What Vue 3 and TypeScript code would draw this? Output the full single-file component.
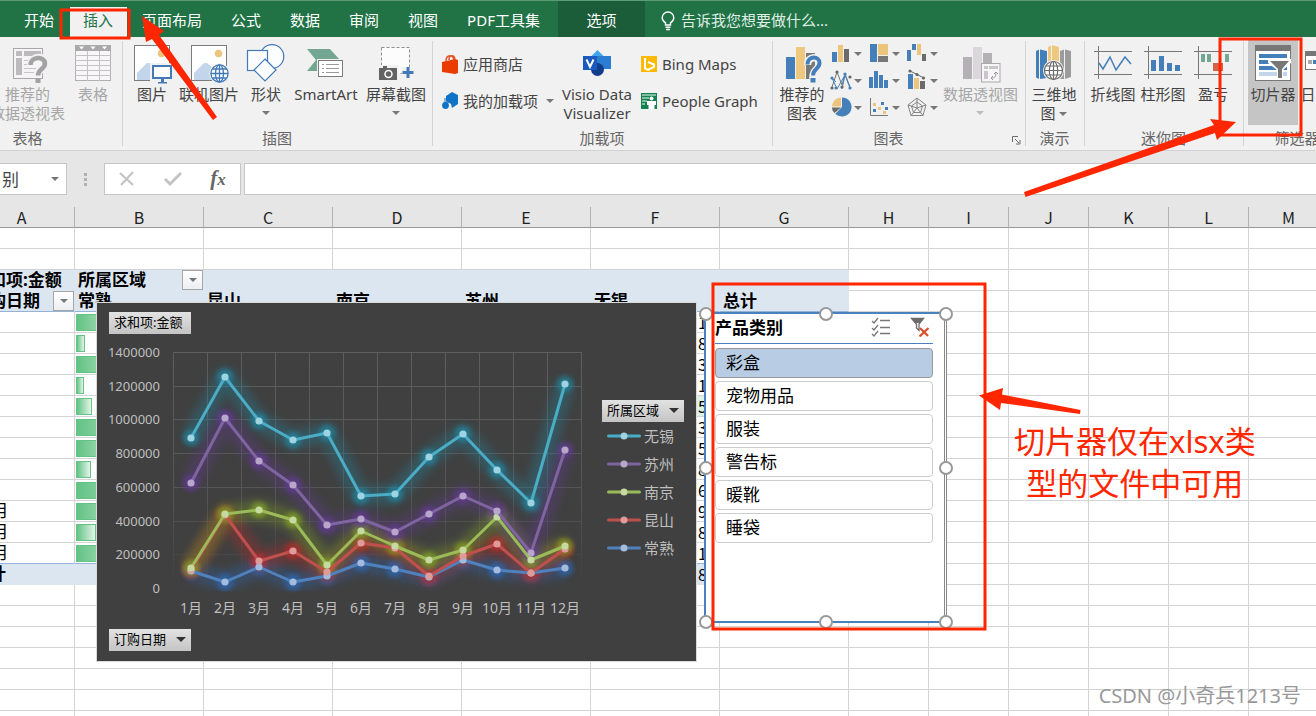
<script setup lang="ts">
interface Series {
  name: string
  color: string
  dot: string
  glow: string
  values: number[]
}

interface PivotRow {
  label: string
  bar: number
  last: string
  lastBar?: boolean
}

const tabs: string[] = ['开始', '插入', '页面布局', '公式', '数据', '审阅', '视图', 'PDF工具集']
const columns: string[] = ['A', 'B', 'C', 'D', 'E', 'F', 'G', 'H', 'I', 'J', 'K', 'L', 'M']
const regions: string[] = ['昆山', '南京', '苏州', '无锡', '总计']
const blankRows: number[] = [1, 2, 3, 4, 5, 6, 7]

const rows: PivotRow[] = [
  { label: '1月', bar: 60, last: '1' },
  { label: '2月', bar: 9, last: '8' },
  { label: '3月', bar: 64, last: '3' },
  { label: '4月', bar: 8, last: '1' },
  { label: '5月', bar: 16, last: '5', lastBar: true },
  { label: '6月', bar: 90, last: '3' },
  { label: '7月', bar: 60, last: '5' },
  { label: '8月', bar: 15, last: '8' },
  { label: '9月', bar: 104, last: '6' },
  { label: '10月', bar: 70, last: '9' },
  { label: '11月', bar: 20, last: '8' },
  { label: '12月', bar: 68, last: '1' },
]

const products: string[] = ['彩盒', '宠物用品', '服装', '警告标', '暖靴', '睡袋']

// Values in thousands, one per month
const series: Series[] = [
  { name: '常熟', color: '#4f81bd', dot: '#a3bbdd', glow: '#2e66b0', values: [101, 36, 125, 36, 71, 150, 115, 65, 166, 107, 89, 121] },
  { name: '昆山', color: '#c0504d', dot: '#df9b99', glow: '#b52a2a', values: [107, 433, 160, 219, 95, 267, 237, 73, 190, 261, 89, 231] },
  { name: '南京', color: '#9bbb59', dot: '#c6d9a0', glow: '#7f9f26', values: [119, 439, 463, 403, 136, 338, 249, 166, 225, 424, 168, 249] },
  { name: '苏州', color: '#8064a2', dot: '#b8a6cb', glow: '#623a92', values: [623, 1008, 753, 611, 374, 409, 332, 439, 546, 457, 208, 819] },
  { name: '无锡', color: '#4bacc6', dot: '#9ed4e2', glow: '#23839d', values: [890, 1252, 991, 878, 919, 546, 558, 777, 914, 700, 504, 1210] },
]
const legend: Series[] = [...series].reverse()

const ticks: number[] = [1400, 1200, 1000, 800, 600, 400, 200, 0]
const months: number[] = Array.from({ length: 12 }, (_, i) => i + 1)

const xOf = (i: number): number => 94 + i * 34
const yOf = (v: number): number => Math.round(285 - (v * 236) / 1400)
const pointsOf = (s: Series): string => s.values.map((v, i) => `${xOf(i)},${yOf(v)}`).join(' ')
</script>

<template>
  <div class="excel">
    <nav class="tabs">
      <button v-for="t in tabs" :key="t" class="tab" :class="{ active: t === '插入' }">{{ t }}</button>
      <button class="tab options">选项</button>
      <label class="tell">
        <svg width="14" height="20" viewBox="0 0 14 20" fill="none" stroke="#fff" stroke-width="1.4">
          <path d="M4.5 14v-2.2C2.5 10.500 1.200 9 1.200 6.700a5.800 5.700 0 0 1 11.600 0c0 2.300-1.300 3.800-3.300 5.100V14z" />
          <path d="M4.500 16.200h5M5 18.500h4" />
        </svg>
        <input type="text" placeholder="告诉我您想要做什么..." aria-label="告诉我您想要做什么" />
      </label>
    </nav>

    <div class="ribbon">
      <section class="group g-table">
        <div class="tools">
          <button class="big dim w75">
            <svg width="40" height="40" viewBox="8 44 40 40">
              <rect x="13.500" y="48.500" width="29" height="30" fill="#f6f4f6" stroke="#a8a8a8" />
              <path d="M16 51h6v5h-6zM24 51h17v5H24zM16 58h6v17h-6z" fill="#bcbabd" />
              <path d="M24 60.500h8M24 64.500h7M24 68.500h12M24 72.500h10" stroke="#c4c4c4" />
              <path d="M30.500 65c0-10 15.500-10 15.500-1.500 0 6-8 5-8 12" fill="none" stroke="#f1f1f1" stroke-width="7" />
              <path d="M30.500 65c0-9 14.500-9 14.500-1.500 0 6-7 5-7 12" fill="none" stroke="#a3a3a3" stroke-width="4.500" />
              <rect x="35.500" y="78" width="5" height="5" fill="#a3a3a3" />
            </svg>
            <span>推荐的<br />数据透视表</span>
          </button>
          <button class="big dim w42">
            <svg width="40" height="40" viewBox="73 44 40 40">
              <rect x="75.500" y="45.500" width="35" height="35" fill="#f8f6f8" stroke="#b0b0b0" />
              <path d="M75 45h36v6H75z" fill="#a9a9a9" />
              <path d="M79 46.500h5l-2.500 3zM90.500 46.500h5l-2.500 3zM102 46.500h5l-2.500 3z" fill="#fff" />
              <path d="M75 55.500h36M75 60.500h36M75 65.500h36M75 70.500h36M75 75.500h36M87.500 51v30M99.500 51v30" stroke="#c2c2c2" />
            </svg>
            <span>表格</span>
          </button>
        </div>
        <h2>表格</h2>
      </section>

      <section class="group g-illus">
        <div class="tools">
          <button class="big w42">
            <svg width="40" height="40" viewBox="132 44 40 40">
              <rect x="134.500" y="45.500" width="35" height="35" fill="#fff" stroke="#7c7c7c" />
              <circle cx="161.500" cy="53.500" r="3.700" fill="#edc47c" />
              <path d="M137 80v-7l10-10h3l5 5v12z" fill="#c3d5ea" />
              <path d="M150 63h22v21h-22z" fill="#f1f1f1" />
              <rect x="153" y="66" width="18" height="12" fill="#fff" stroke="#4379b6" stroke-width="2" />
              <path d="M161 79h3v3h-3zM158 82h9v1.500h-9z" fill="#4379b6" />
            </svg>
            <span>图片</span>
          </button>
          <button class="big w66">
            <svg width="40" height="40" viewBox="189 44 40 40">
              <rect x="191.500" y="45.500" width="35" height="35" fill="#fff" stroke="#7c7c7c" />
              <circle cx="218.500" cy="53.500" r="3.700" fill="#edc47c" />
              <path d="M194 80v-7l10-10h3l6 5v12z" fill="#c3d5ea" />
              <circle cx="219.500" cy="73.500" r="10.300" fill="#f1f1f1" />
              <g fill="#fff" stroke="#4379b6" stroke-width="1.300">
                <circle cx="219.500" cy="73.500" r="8.600" />
                <ellipse cx="219.500" cy="73.500" rx="4" ry="8.600" />
                <path d="M219.500 65v17M211 73.500h17M212.500 69h14M212.500 78h14" />
              </g>
            </svg>
            <span>联机图片</span>
          </button>
          <button class="big w42">
            <svg width="40" height="40" viewBox="247 44 40 40" fill="#fcfdff" stroke="#4379b6" stroke-width="1.200">
              <circle cx="273" cy="56.500" r="11.800" />
              <rect x="248.500" y="50.500" width="20" height="20" />
              <path d="M266 59l11 11-11 11-11-11z" />
            </svg>
            <span>形状<i class="caret"></i></span>
          </button>
          <button class="big w70">
            <svg width="40" height="40" viewBox="308 44 40 40">
              <path d="M309 49h23l10 11-9 11h-24l9-11z" fill="#73a792" />
              <rect x="319" y="59" width="27" height="19" fill="#f1f1f1" />
              <rect x="320.500" y="60.500" width="24" height="16" fill="#fff" stroke="#7c7c7c" />
              <path d="M324 64.500h2M328 64.500h13M324 68.500h2M328 68.500h13M324 72.500h2M328 72.500h13" stroke="#9a9a9a" />
            </svg>
            <span>SmartArt</span>
          </button>
          <button class="big w66">
            <svg width="40" height="40" viewBox="375 44 40 40">
              <rect x="380.500" y="47.500" width="28" height="26" fill="#fcfcfc" stroke="#8f8f8f" stroke-dasharray="3 2" />
              <path d="M377 65h21v16h-21zM401 67h12v12h-12z" fill="#f1f1f1" />
              <path d="M378 68h4v-2h4v2h10v12h-18z" fill="#636363" />
              <circle cx="387.500" cy="74" r="3.500" fill="none" stroke="#fff" stroke-width="1.500" />
              <path d="M407 67v11M401.500 72.500h11" stroke="#4379b6" stroke-width="3" />
            </svg>
            <span>屏幕截图<i class="caret"></i></span>
          </button>
        </div>
        <h2>插图</h2>
      </section>

      <section class="group g-addin">
        <div class="tools">
          <div class="stack">
            <button class="small">
              <svg width="18" height="20" viewBox="441 53 18 20">
                <path d="M446 60c0-7 8-7 8 0M449 59c0-5 5-6 6-1" fill="none" stroke="#e8502a" stroke-width="1.500" />
                <path d="M442 61l13-3 3 1v13l-3 1-13-2z" fill="#eb3c00" />
              </svg>应用商店
            </button>
            <button class="small">
              <svg width="18" height="18" viewBox="441 92 18 18" fill="#0f73c6">
                <path d="M446 96l6-4 6 3v9l-6 4-1-4-5-3z" />
                <circle cx="445.500" cy="105.500" r="3.400" />
                <path d="M444 98h5v5h-5z" opacity=".5" />
              </svg>我的加载项<i class="caret far"></i>
            </button>
          </div>
          <button class="big w74">
            <svg width="40" height="40" viewBox="577 44 40 40">
              <path d="M597.500 50l9 9-9 9-9-9z" fill="#41a5ee" />
              <rect x="597" y="56" width="14" height="13" fill="#2b7cd3" />
              <circle cx="597.500" cy="69.500" r="6.500" fill="#123c8c" />
              <rect x="583" y="56" width="14" height="14" fill="#185abd" />
              <path d="M586.500 59.500l3.500 7.500 3.500-7.500" fill="none" stroke="#fff" stroke-width="2" />
            </svg>
            <span>Visio Data<br />Visualizer</span>
          </button>
          <div class="stack">
            <button class="small">
              <svg width="18" height="18" viewBox="640 55 18 18">
                <rect x="641" y="56" width="16" height="16" fill="#ffb900" />
                <path d="M645 58v10.500l3 1.500 6-3v-2.500l-6-2.500" fill="none" stroke="#fff" stroke-width="2" />
              </svg>Bing Maps
            </button>
            <button class="small">
              <svg width="18" height="18" viewBox="640 92 18 18">
                <rect x="641" y="93" width="16" height="16" fill="#12804f" />
                <path d="M642 95h14M642 98h7M642 101h5M642 104h3" stroke="#a8d4be" stroke-width="1.300" />
                <circle cx="651.500" cy="98.500" r="2" fill="#fff" />
                <path d="M647 101h9v4h-1.500v4h-6v-4H647z" fill="#fff" />
              </svg>People Graph
            </button>
          </div>
        </div>
        <h2>加载项</h2>
      </section>

      <section class="group g-charts">
        <div class="tools">
          <button class="big w50">
            <svg width="40" height="40" viewBox="783 44 40 40">
              <path d="M787 57h9v22h-9z" fill="#447fb9" />
              <path d="M797 47h9v32h-9z" fill="#edc87e" />
              <path d="M807 53h9v26h-9z" fill="#777" />
              <path d="M808.500 65c0-9.500 12-9.500 12-1.500 0 6-6.500 6-6.500 13v5" fill="none" stroke="#f1f1f1" stroke-width="7.500" />
              <path d="M808.500 64.500c0-9 12-9 12-1.500 0 6-6.500 5.500-6.500 12.500" fill="none" stroke="#447fb9" stroke-width="4" />
              <rect x="811.500" y="78" width="5" height="4.500" fill="#447fb9" />
            </svg>
            <span>推荐的<br />图表</span>
          </button>
          <div class="mini">
            <button aria-label="柱形图">
              <svg width="23" height="23" viewBox="829 42 23 23"><path d="M831 52h5v10h-5z" fill="#447fb9" /><path d="M837 45h5v17h-5z" fill="#edc47c" /><path d="M843 49h5v13h-5z" fill="#6b6b6b" /></svg><i class="caret"></i>
            </button>
            <button aria-label="层次结构图">
              <svg width="23" height="23" viewBox="867 42 23 23"><path d="M869 44h7v18h-7z" fill="#447fb9" /><path d="M877 44h10v11h-10z" fill="#edc47c" /><path d="M877 56h10v6h-10z" fill="#777" /></svg><i class="caret"></i>
            </button>
            <button aria-label="瀑布图">
              <svg width="23" height="23" viewBox="905 42 23 23"><path d="M906 50h4v11h-4zM911 44h4v6h-4z" fill="#447fb9" /><path d="M916 44h4v11h-4z" fill="#edc47c" /><path d="M921 54h4v7h-4z" fill="#6b6b6b" /></svg><i class="caret"></i>
            </button>
            <button aria-label="折线图">
              <svg width="23" height="23" viewBox="829 69 23 23"><g fill="none"><path d="M831 87l5-15 5 13 3-11 5 13" stroke="#777" /><path d="M831 78l5 11 8-14-3 14M844 75l5 13M831 78l4 4" stroke="#447fb9" /></g><g fill="#447fb9"><circle cx="831" cy="78" r="1.600" /><circle cx="835" cy="88" r="1.600" /><circle cx="844" cy="74" r="1.600" /><circle cx="849" cy="88" r="1.600" /></g><g fill="#666"><circle cx="831" cy="88" r="1.600" /><circle cx="836" cy="72" r="1.600" /><circle cx="841" cy="87" r="1.600" /><circle cx="849" cy="77" r="1.600" /></g></svg><i class="caret"></i>
            </button>
            <button aria-label="直方图">
              <svg width="23" height="23" viewBox="867 69 23 23"><path d="M868 77h4v11h-4zM873 71h4v17h-4zM878 75h4v13h-4zM883 80h4v8h-4z" fill="#447fb9" /></svg><i class="caret"></i>
            </button>
            <button aria-label="组合图">
              <svg width="23" height="23" viewBox="905 69 23 23"><path d="M907 74h5v15h-5z" fill="#447fb9" /><path d="M913 78h5v11h-5z" fill="#edc47c" /><path d="M919 81h5v8h-5z" fill="#6b6b6b" /><path d="M909 71l6 3 8 4" stroke="#666" fill="none" /><g fill="#666"><circle cx="909" cy="71" r="1.600" /><circle cx="916" cy="74.500" r="1.600" /><circle cx="922.500" cy="78" r="1.600" /></g></svg><i class="caret"></i>
            </button>
            <button aria-label="饼图">
              <svg width="23" height="23" viewBox="829 96 23 23"><path d="M841 107V97.500a9.500 9.500 0 1 1-6.700 16.200z" fill="#447fb9" /><path d="M840 106.500h-9a9 9 0 0 1 9-9z" fill="#edc47c" /><path d="M840 107.500h-9c0 2.500 1 4 2.600 5.600z" fill="#6b6b6b" /></svg><i class="caret"></i>
            </button>
            <button aria-label="散点图">
              <svg width="23" height="23" viewBox="867 96 23 23"><path d="M869.500 98v17.500H887" stroke="#777" fill="none" /><path d="M872 103h3v3h-3zM882 111h3v3h-3zM877 107h3v3h-3z" fill="#edc47c" /><path d="M880 102h3v3h-3zM872 109h3v3h-3zM884 107h3v3h-3z" fill="#447fb9" /></svg><i class="caret"></i>
            </button>
            <button aria-label="雷达图">
              <svg width="23" height="23" viewBox="905 96 23 23" fill="none" stroke="#858585"><path d="M916 98l9 7-3 10.500h-12L907 105z" /><path d="M916 102l5.500 4-2 6.500h-7l-2-6.500z" /><path d="M916 98v10l9-3M916 108l6 7.500M916 108l-6 7.500M916 108l-9-3" /></svg><i class="caret"></i>
            </button>
          </div>
          <button class="big dim w77">
            <svg width="40" height="40" viewBox="961 44 40 40">
              <path d="M963 57h9v22h-9zM983 53h9v26h-9z" fill="#b3b1b4" />
              <path d="M973 47h9v32h-9z" fill="#dad6db" />
              <rect x="981.500" y="63.500" width="18.500" height="18.500" fill="#f7f5f7" stroke="#a9a9a9" />
              <path d="M984 66h4v3h-4zM989 66h9v3h-9zM984 71h4v8h-4z" fill="#c9c6ca" />
              <path d="M991 78c4 0 5-1 5-6m-2 2l2-2 2 2m-5 2l-2 2 2 2" fill="none" stroke="#999" />
            </svg>
            <span>数据透视图<i class="caret"></i></span>
          </button>
          <svg class="launcher" width="9" height="9" viewBox="0 0 9 9" fill="none" stroke="#6d6d6d"><path d="M.5 6V.5H6M3 3l4 4M8 4v4H4" /></svg>
        </div>
        <h2>图表</h2>
      </section>

      <section class="group g-tour">
        <div class="tools">
          <button class="big w50">
            <svg width="40" height="40" viewBox="1035 44 40 40">
              <path d="M1037 51l3-1.500V79l-3-1.500zM1041 49.500l7 1.500v27l-7 1z" fill="#447fb9" />
              <path d="M1049 47l3-1.500V79h-3zM1053 45l7 2v32h-7z" fill="#edc87e" />
              <path d="M1061 51l4-1.500V79h-4zM1066 49.500l6 1.500v26l-6 2z" fill="#9b9b9b" />
              <circle cx="1054.500" cy="70.500" r="10.500" fill="#f1f1f1" />
              <g fill="#fff" stroke="#6b6b6b" stroke-width="1.200">
                <circle cx="1054.500" cy="70.500" r="9" />
                <ellipse cx="1054.500" cy="70.500" rx="4.200" ry="9" />
                <path d="M1054.500 61.500v18M1045.500 70.500h18M1047 66h15M1047 75h15" />
              </g>
            </svg>
            <span>三维地<br />图 <i class="caret inline"></i></span>
          </button>
        </div>
        <h2>演示</h2>
      </section>

      <section class="group g-spark">
        <div class="tools">
          <button class="big w50">
            <svg width="40" height="40" viewBox="1094 44 40 40" fill="none" stroke="#777">
              <path d="M1099.500 46v33M1095 51.500h38M1095 74.500h38" />
              <path d="M1100 63l4 6 7-12 6 13 9-13 6 7" stroke="#447fb9" stroke-width="1.500" />
            </svg>
            <span>折线图</span>
          </button>
          <button class="big w50">
            <svg width="40" height="40" viewBox="1144 44 40 40" fill="none" stroke="#777">
              <path d="M1149.500 46v33M1145 51.500h38M1145 74.500h38" />
              <path d="M1152 60h5v11h-5zM1160 56h5v15h-5zM1168 63h5v8h-5zM1176 65h5v6h-5z" fill="#447fb9" stroke="none" />
            </svg>
            <span>柱形图</span>
          </button>
          <button class="big w50">
            <svg width="40" height="40" viewBox="1194 44 40 40" fill="none" stroke="#777">
              <path d="M1199.500 46v33M1195 51.500h38M1195 74.500h38" />
              <path d="M1202 54h4v8h-4zM1208 54h4v8h-4zM1226 54h4v8h-4z" fill="#73a792" stroke="none" />
              <path d="M1214 63h10v8h-10z" fill="#d86344" stroke="none" />
            </svg>
            <span>盈亏</span>
          </button>
        </div>
        <h2>迷你图</h2>
      </section>

      <section class="group g-filter">
        <div class="tools">
          <button class="big pressed w50">
            <svg width="40" height="40" viewBox="1253 44 40 40">
              <rect x="1255.500" y="45.500" width="35" height="35" fill="#fff" stroke="#777" />
              <path d="M1255 45h36v6h-36z" fill="#777" />
              <path d="M1259 54h28v4h-28zM1259 60h28v4h-28zM1259 66h28v4h-28z" fill="#447fb9" />
              <path d="M1259 72h28v4h-28z" fill="#c3d5ea" />
              <path d="M1268 59h23v4l-8 7v9h-6v-9l-9-7z" fill="#fff" />
              <path d="M1270 61h19l-7 8v9h-4v-9z" fill="#777" />
            </svg>
            <span>切片器</span>
          </button>
          <button class="big w50">
            <svg width="40" height="40" viewBox="1303 44 40 40">
              <rect x="1305.500" y="51.500" width="34" height="18" fill="#fff" stroke="#777" />
              <path d="M1305 51h35v5h-35z" fill="#777" />
              <path d="M1308 60h4v4h-4z" fill="#aaa" /><path d="M1313 60h8v4h-8z" fill="#447fb9" />
            </svg>
            <span>日程表</span>
          </button>
        </div>
        <h2>筛选器</h2>
      </section>
    </div>

    <div class="formula">
      <label class="namebox">
        <input type="text" value="别" aria-label="名称框" />
        <i class="caret"></i>
      </label>
      <span class="grip"><b></b><b></b><b></b></span>
      <div class="fx">
        <button aria-label="取消"><svg width="16" height="16" viewBox="0 0 16 16"><path d="M1 2l13 12M14 1L2 14" stroke="#c4c4c4" stroke-width="2.200" /></svg></button>
        <button aria-label="输入"><svg width="18" height="16" viewBox="0 0 18 16"><path d="M1 8l5 5L17 2" fill="none" stroke="#c4c4c4" stroke-width="3" /></svg></button>
        <button class="fn" aria-label="插入函数"><em>f</em><em class="sub">x</em></button>
      </div>
      <input class="bar" type="text" aria-label="编辑栏" />
    </div>

    <div class="sheet">
      <table>
        <colgroup>
          <col class="ca" />
          <col v-for="n in 6" :key="n" class="cb" />
          <col v-for="n in 6" :key="n" class="cc" />
        </colgroup>
        <thead>
          <tr><th v-for="c in columns" :key="c">{{ c }}</th></tr>
        </thead>
        <tbody>
          <tr v-for="n in 2" :key="n"><td v-for="c in columns" :key="c"></td></tr>
          <tr class="head">
            <td>求和项:金额</td>
            <td>所属区域<button class="filter" aria-label="筛选所属区域"><i class="caret"></i></button></td>
            <td v-for="n in 5" :key="n"></td>
            <td v-for="n in 6" :key="n" class="plain"></td>
          </tr>
          <tr class="head under">
            <td>订购日期<button class="filter" aria-label="筛选订购日期"><i class="caret"></i></button></td>
            <td>常熟</td>
            <td v-for="r in regions" :key="r">{{ r }}</td>
            <td v-for="n in 6" :key="n" class="plain"></td>
          </tr>
          <tr v-for="(r, i) in rows" :key="r.label" :class="{ under: i === rows.length - 1 }">
            <td>{{ r.label }}</td>
            <td class="data"><div class="databar" :style="{ width: r.bar + 'px' }"></div></td>
            <td v-for="n in 3" :key="n"></td>
            <td class="num" :class="{ tint: r.lastBar }">{{ r.last }}</td>
            <td></td>
            <td v-for="n in 6" :key="n" class="plain"></td>
          </tr>
          <tr class="head total">
            <td>总计</td>
            <td v-for="n in 4" :key="n"></td>
            <td class="num">8</td>
            <td></td>
            <td v-for="n in 6" :key="n" class="plain"></td>
          </tr>
          <tr v-for="n in blankRows" :key="n"><td v-for="c in columns" :key="c"></td></tr>
        </tbody>
      </table>
    </div>

    <div class="chart">
      <svg width="598" height="356" viewBox="0 0 598 356" role="img" aria-label="各区域金额折线图">
        <defs>
          <filter id="soft" x="-20%" y="-40%" width="140%" height="180%"><feGaussianBlur stdDeviation="5" /></filter>
          <filter id="halo" x="-20%" y="-40%" width="140%" height="180%"><feGaussianBlur stdDeviation="2.500" /></filter>
          <linearGradient id="fade" gradientUnits="userSpaceOnUse" x1="0" y1="49" x2="0" y2="285">
            <stop offset="0" stop-color="#5e5e5e" />
            <stop offset=".6" stop-color="#555" />
            <stop offset="1" stop-color="#404040" />
          </linearGradient>
        </defs>
        <g fill="url(#fade)">
          <rect v-for="n in 13" :key="'v' + n" :x="42 + n * 34" y="49" width="1" height="236" />
          <rect v-for="t in ticks.slice(0, 7)" :key="'h' + t" x="76" :y="yOf(t)" width="409" height="1" />
        </g>
        <g v-for="s in series" :key="'g' + s.name">
          <polyline :points="pointsOf(s)" fill="none" :stroke="s.glow" stroke-width="19" stroke-linejoin="round" opacity=".36" filter="url(#soft)" />
          <g filter="url(#halo)" opacity=".8">
            <circle v-for="(v, i) in s.values" :key="i" :cx="xOf(i)" :cy="yOf(v)" r="8" :fill="s.glow" />
          </g>
        </g>
        <g v-for="s in series" :key="s.name">
          <polyline :points="pointsOf(s)" fill="none" :stroke="s.color" stroke-width="3" stroke-linejoin="round" />
          <circle v-for="(v, i) in s.values" :key="i" :cx="xOf(i)" :cy="yOf(v)" r="3.600" :fill="s.dot" />
        </g>
        <g class="axis">
          <text v-for="t in ticks" :key="t" x="63" :y="yOf(t) + 5" text-anchor="end">{{ t * 1000 }}</text>
          <text v-for="m in months" :key="m" class="month" :x="xOf(m - 1)" y="310" text-anchor="middle">{{ m }}月</text>
        </g>
      </svg>
      <button class="field value">求和项:金额</button>
      <button class="field date">订购日期<i class="tri"></i></button>
      <div class="legend">
        <button class="field">所属区域<i class="tri"></i></button>
        <ul>
          <li v-for="s in legend" :key="s.name">
            <svg width="34" height="8" viewBox="0 0 34 8">
              <path d="M1.500 4h31" :stroke="s.color" stroke-width="3" stroke-linecap="round" />
              <circle cx="17" cy="4" r="3.500" :fill="s.dot" />
            </svg>{{ s.name }}
          </li>
        </ul>
      </div>
    </div>

    <div class="slicer">
      <header>
        <h3>产品类别</h3>
        <button aria-label="多选">
          <svg width="20" height="20" viewBox="0 0 20 20" fill="none" stroke="#777" stroke-width="1.300"><path d="M1 4l2 2 4-5M1 11l2 2 4-5M1 17l2 2 4-5M9 3.500h10M9 10.500h10M9 16.500h10" /></svg>
        </button>
        <button aria-label="清除筛选器">
          <svg width="20" height="20" viewBox="0 0 20 20"><path d="M1.500 1.500h12L9 7v6.500L6.500 11V7z" fill="#fff" stroke="#6b6b6b" stroke-width="1.300" /><path d="M1 1h13l-4 5H5z" fill="#6b6b6b" /><path d="M10 11l8 8M18.500 11L9.500 19.500" stroke="#d9532c" stroke-width="2.300" /></svg>
        </button>
      </header>
      <button v-for="(p, i) in products" :key="p" class="item" :class="{ on: i === 0 }">{{ p }}</button>
      <i v-for="h in ['nw', 'n', 'ne', 'w', 'e', 'sw', 's', 'se']" :key="h" class="handle" :class="h"></i>
    </div>

    <svg class="marks" width="1316" height="716" viewBox="0 0 1316 716">
      <g fill="none" stroke="#ff2600" stroke-width="3">
        <rect x="61" y="10" width="68" height="28" />
        <rect x="1220" y="39" width="81" height="96" />
        <rect x="713" y="284" width="272" height="345" />
      </g>
      <g fill="#ff2600">
        <path d="M142 16l22 15-5 4 58 82-4 3-61-81-6 3z" />
        <path d="M1236 122l-19 18-2-7-189.500 64-1.500-5 190-67-4-6z" />
        <path d="M979 395.500l24-7.500-1 6.500 78.500 15.500-.5 4-79-11-1 7z" />
      </g>
    </svg>
    <p class="note">切片器仅在xlsx类<br />型的文件中可用</p>
    <p class="watermark">CSDN @小奇兵1213号</p>
  </div>
</template>

<style>
body {
  margin: 0;
}
</style>

<style scoped>
* {
  box-sizing: border-box;
}
.excel {
  position: relative;
  height: 100vh;
  overflow: hidden;
  background: #fff;
  color: #444;
  font: 15px/19px 'Noto Sans', 'Noto Sans CJK SC', sans-serif;
}
button,
input {
  margin: 0;
  padding: 0;
  border: 0;
  background: none;
  color: inherit;
  font: inherit;
}
i.caret {
  display: block;
  width: 0;
  border: 4px solid transparent;
  border-top-color: #777;
  border-bottom: 0;
}
.tabs {
  display: flex;
  gap: 1px;
  height: 37px;
  padding: 3px 0 0 10px;
  border-top: 1px solid #5d9a78;
  background: #217346;
  color: #fff;
}
.tab {
  padding: 0 14px;
  white-space: nowrap;
}
.tab.active {
  margin: 3px 0 0 1px;
  padding: 0 14px 3px 13px;
  background: #f1f1f1;
  color: #217346;
}
.tab.options {
  width: 87px;
  margin: -3px 0 0 3px;
  padding-top: 3px;
  background: #1b5c39;
}
.tell {
  display: flex;
  align-items: center;
  gap: 6px;
  margin-left: 15px;
}
.tell input {
  width: 200px;
}
.tell input::placeholder {
  color: #dfeee5;
  opacity: 1;
}
.ribbon {
  display: flex;
  height: 114px;
  padding-top: 3px;
  border-bottom: 1px solid #d2d2d2;
  background: #f1f1f1;
  overflow: hidden;
}
.group {
  display: flex;
  flex: none;
  flex-direction: column;
  position: relative;
}
.group::after {
  content: '';
  position: absolute;
  top: 1px;
  right: 0;
  width: 1px;
  height: 105px;
  background: #d4d4d4;
}
.group h2 {
  margin: 0;
  padding-right: 2px;
  color: #666;
  font-size: 15px;
  font-weight: 400;
  line-height: 19px;
  text-align: center;
}
.tools {
  display: flex;
  height: 89px;
}
.g-table {
  width: 189px;
  margin-left: -66px;
}
.g-table .tools {
  justify-content: flex-end;
  gap: 7px;
  padding-right: 9px;
}
.g-illus {
  width: 310px;
}
.g-illus .tools {
  padding-left: 7px;
  gap: 3px;
}
.g-illus .w42 {
  width: 44px;
}
.g-addin {
  width: 340px;
}
.g-addin .tools {
  padding-left: 8px;
}
.g-charts {
  width: 253px;
  padding-right: 20px;
}
.g-charts .tools {
  padding-left: 4px;
}
.g-tour {
  width: 59px;
}
.g-tour .tools {
  padding-left: 3px;
}
.g-spark {
  width: 159px;
}
.g-spark .tools {
  padding-left: 3px;
}
.g-filter {
  width: 108px;
}
.g-filter .tools {
  padding-left: 4px;
}
.big {
  display: flex;
  flex: none;
  flex-direction: column;
  align-items: center;
  height: 85px;
  padding-top: 4px;
  white-space: nowrap;
}
.big span {
  display: block;
  margin-top: 1px;
}
.big .caret {
  margin: 7px auto 0;
}
.big .caret.inline {
  display: inline-block;
  margin: 0 0 3px;
}
.big.dim {
  color: #a6a6a6;
}
.dim .caret {
  border-top-color: #bdbdbd;
}
.big.pressed {
  background: #c5c5c5;
}
.w42 {
  width: 42px;
}
.w50 {
  width: 50px;
}
.w66 {
  width: 64px;
}
.w70 {
  width: 70px;
}
.w74 {
  width: 76px;
}
.w75 {
  width: 75px;
}
.w77 {
  width: 77px;
}
.stack {
  display: flex;
  flex: none;
  flex-direction: column;
  gap: 17px;
  padding-top: 14px;
}
.stack:first-child {
  width: 118px;
}
.stack:last-child {
  padding-left: 5px;
}
.small {
  display: flex;
  align-items: center;
  gap: 4px;
  height: 20px;
  white-space: nowrap;
}
.caret.far {
  margin-left: 4px;
}
.mini {
  display: grid;
  grid-template-columns: 38px 38px 38px;
  grid-auto-rows: 27px;
  margin-left: 3px;
}
.mini button {
  display: flex;
  align-items: center;
  gap: 1px;
}
.launcher {
  position: absolute;
  right: 5px;
  bottom: 5px;
}
.g-charts .big.w77 {
  margin-left: -2px;
}
.formula {
  display: flex;
  height: 56px;
  padding: 12px 0 12px;
  background: #e6e6e6;
}
.namebox,
.fx,
.bar {
  height: 32px;
  border: 1px solid #c6c6c6;
  background: #fff;
}
.namebox {
  display: flex;
  align-items: center;
  width: 67px;
  border-left: 0;
  padding-right: 7px;
  font-size: 17px;
}
.namebox input {
  flex: 1;
  min-width: 0;
  padding-left: 2px;
}
.grip {
  display: flex;
  flex-direction: column;
  justify-content: center;
  align-items: center;
  gap: 2px;
  width: 37px;
}
.grip b {
  width: 3px;
  height: 3px;
  background: #b0b0b0;
}
.fx {
  display: flex;
  align-items: center;
  justify-content: space-around;
  width: 137px;
}
.fx svg {
  display: block;
}
.fx .fn {
  color: #666;
  font: italic bold 21px/22px 'Liberation Serif', serif;
}
.fx .sub {
  font-size: 17px;
}
.bar {
  flex: 1;
  min-width: 0;
  margin-left: 3px;
  border-right: 0;
}
.sheet {
  overflow: hidden;
}
table {
  width: 1360px;
  margin-left: -31px;
  border-collapse: separate;
  border-spacing: 0;
  table-layout: fixed;
  color: #000;
  font-size: 17px;
}
.ca {
  width: 106px;
}
.cb {
  width: 129px;
}
.cc {
  width: 80px;
}
th {
  height: 21px;
  padding: 0;
  border-right: 1px solid #b2b2b2;
  border-bottom: 1px solid #999;
  background: #e6e6e6;
  color: #222;
  font-family: 'Noto Sans CJK SC', sans-serif;
  font-size: 16px;
  font-weight: 400;
  line-height: 20px;
}
td {
  height: 21px;
  padding: 0 0 0 3px;
  border-right: 1px solid #d4d4d4;
  border-bottom: 1px solid #d4d4d4;
  line-height: 20px;
  white-space: nowrap;
}
.head td:not(.plain) {
  border-color: #dce6f1;
  background: #dce6f1;
  font-weight: 700;
}
.under td:not(.plain) {
  border-bottom-color: #95b3d7;
}
.filter {
  float: right;
  display: grid;
  place-items: center;
  width: 21px;
  height: 20px;
  border: 1px solid #a6a6a6;
  background: linear-gradient(#fff, #eceff3);
}
td.data {
  padding: 0 0 0 1px;
}
.databar {
  height: 17px;
  border: 1px solid #63c384;
  background: linear-gradient(90deg, #63c384, #e4f5ea);
}
td.num {
  padding-right: 12px;
  font-family: 'Noto Sans CJK SC', sans-serif;
  font-size: 16px;
  text-align: right;
}
.total td.num {
  font-weight: 400;
}
td.tint {
  background: #ddf2e4;
}
.chart {
  position: absolute;
  left: 96px;
  top: 302px;
  width: 601px;
  height: 360px;
  border: 1px solid #d9d9d9;
  background: #404040;
}
.axis {
  fill: #bfbfbf;
  font-size: 13px;
}
.axis .month {
  font-size: 14px;
}
.field {
  display: flex;
  align-items: center;
  justify-content: space-between;
  width: 82px;
  height: 22px;
  padding: 0 5px 1px;
  background: linear-gradient(#e2e2e2, #c4c4c4);
  color: #000;
  font-size: 13px;
  white-space: nowrap;
}
.field.value,
.field.date,
.legend {
  position: absolute;
}
.field.value {
  left: 12px;
  top: 9px;
}
.field.date {
  left: 12px;
  bottom: 10px;
}
.tri {
  border: 5px solid transparent;
  border-top-color: #333;
  border-bottom: 0;
}
.legend {
  left: 505px;
  top: 97px;
}
.legend ul {
  margin: 0;
  padding: 0 0 0 5px;
  list-style: none;
}
.legend li {
  display: flex;
  align-items: center;
  gap: 3px;
  height: 28px;
  color: #bfbfbf;
  font-size: 15px;
}
.slicer {
  position: absolute;
  left: 704px;
  top: 312px;
  display: flex;
  flex-direction: column;
  gap: 3px;
  width: 243px;
  height: 311px;
  padding: 3px 11px 0 9px;
  border: 2px solid #4a80bd;
  border-right: 3px double #888;
  background: #fff;
  color: #000;
  font-size: 17px;
}
.slicer header {
  display: flex;
  align-items: flex-start;
  gap: 19px;
  height: 27px;
  margin-bottom: 1px;
  padding-right: 3px;
  border-bottom: 1px solid #4a80bd;
}
.slicer header svg {
  display: block;
}
.slicer h3 {
  flex: 1;
  margin: 0;
  font-size: 17px;
  line-height: 22px;
}
.item {
  flex: none;
  height: 30px;
  padding: 0 10px 2px;
  border: 1px solid #ccc;
  border-radius: 4px;
  text-align: left;
}
.item.on {
  border-color: #999;
  background: #b8cce4;
}
.handle {
  position: absolute;
  width: 14px;
  height: 14px;
  border: 2px solid #999;
  border-radius: 50%;
  background: #fff;
}
.nw, .w, .sw {
  left: -7px;
}
.n, .s {
  left: 113px;
}
.ne, .e, .se {
  right: -9px;
}
.nw, .n, .ne {
  top: -7px;
}
.w, .e {
  top: 147px;
}
.sw, .s, .se {
  bottom: -8px;
}
.marks {
  position: absolute;
  left: 0;
  top: 0;
  pointer-events: none;
}
.note {
  position: absolute;
  left: 1014px;
  top: 420px;
  margin: 0;
  color: #ff2600;
  font-size: 31px;
  line-height: 42px;
  text-align: center;
}
.watermark {
  position: absolute;
  right: 15px;
  bottom: 6px;
  margin: 0;
  color: #999;
  font-size: 20px;
  line-height: 28px;
}
</style>
